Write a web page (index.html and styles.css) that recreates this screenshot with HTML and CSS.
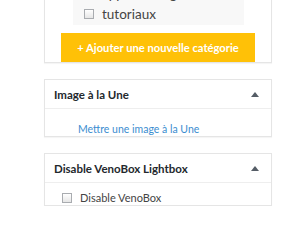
FILE: index.html
```html
<!DOCTYPE html>
<html lang="fr">

<head>
  <meta charset="UTF-8">
  <meta name="viewport" content="width=device-width, initial-scale=1.0">
  <title>Catégories</title>
  <link rel="stylesheet" href="styles.css">
</head>

<body>
  <div class="sidebar">
    <div class="box box-cats">
      <ul class="cat-list">
        <li><label><input type="checkbox"> apprentissage</label></li>
        <li><label><input type="checkbox"> tutoriaux</label></li>
      </ul>
      <button class="add-cat">+ Ajouter une nouvelle catégorie</button>
    </div>

    <div class="box">
      <div class="box-head">
        <h2>Image à la Une</h2>
        <span class="toggle"></span>
      </div>
      <div class="box-body">
        <a href="#" class="set-thumb">Mettre une image à la Une</a>
      </div>
    </div>

    <div class="box">
      <div class="box-head">
        <h2>Disable VenoBox Lightbox</h2>
        <span class="toggle"></span>
      </div>
      <div class="box-body box-check">
        <label><input type="checkbox"> Disable VenoBox</label>
      </div>
    </div>
  </div>
</body>

</html>
```

FILE: styles.css
```css
body {
  margin: 0;
  background-color: #ffffff;
  font-family: Lato, "Open Sans", sans-serif;
  font-size: 12px;
  color: #444444;
}

.sidebar {
  display: flex;
  flex-direction: column;
  gap: 16px;
  width: 228px;
  margin-left: 44px;
  margin-top: -17px;
}

.box {
  background-color: #ffffff;
  border: 1px solid #e5e5e5;
  box-shadow: 0 1px 1px rgba(0, 0, 0, 0.04);
}

/* liste des catégories */
.cat-list {
  list-style: none;
  margin: 0 27px 0 28px;
  padding: 0 0 1px;
  background-color: #f8f8f8;
}

.cat-list li {
  height: 20px;
  display: flex;
  align-items: center;
  padding-left: 11px;
  font-size: 13.5px;
}

.cat-list label,
.box-check label {
  display: flex;
  align-items: center;
  gap: 8px;
}

input[type="checkbox"] {
  appearance: none;
  margin: 0;
  width: 10px;
  height: 10px;
  border: 1px solid #a9acb0;
  background: linear-gradient(#ffffff, #e6e6e6);
}

.add-cat {
  display: block;
  margin: 8px 0 0 16px;
  padding: 0;
  width: 194px;
  height: 29px;
  border: none;
  background-color: #ffc107;
  color: #ffffff;
  font-family: inherit;
  font-size: 11.2px;
  font-weight: 700;
  white-space: nowrap;
  cursor: pointer;
}

.box-head {
  display: flex;
  justify-content: space-between;
  align-items: center;
  height: 28px;
  padding: 0 12px 0 9px;
  border-bottom: 1px solid #eeeeee;
}

.box-head h2 {
  margin: 0;
  font-size: 11.5px;
  font-weight: 700;
  color: #23282d;
}

.toggle {
  width: 0;
  height: 0;
  border-left: 4px solid transparent;
  border-right: 4px solid transparent;
  border-bottom: 5px solid #555d66;
}

.box-body {
  padding: 14px 0 1px 33px;
  line-height: 12px;
}

.set-thumb {
  color: #3b8dd0;
  text-decoration: none;
  font-size: 10.5px;
}

.box-check {
  padding: 9px 0 2px 17px;
  line-height: 11px;
  font-size: 11px;
}
```
